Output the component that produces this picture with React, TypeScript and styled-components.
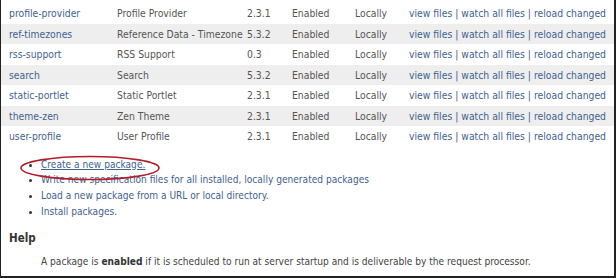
import React from "react";
import styled, { createGlobalStyle } from "styled-components";

const Global = createGlobalStyle`
  html, body { margin: 0; padding: 0; background: #fff; }
  body {
    font-family: "DejaVu Sans Condensed", "DejaVu Sans", Tahoma, sans-serif;
    font-stretch: condensed;
    font-size: 10.4px;
    color: #555;
  }
`;

const Frame = styled.div`
  width: 616px;
  height: 278px;
  box-sizing: border-box;
  border-left: 1px solid #222;
  border-right: 2px solid #222;
  border-bottom: 2px solid #222;
  overflow: hidden;
  background: #fff;
  padding-top: 3px;
`;

const Table = styled.div`
  display: grid;
  grid-template-columns: 116px 130px 45px 63px 54px 1fr;
  font-size: 10.3px;
`;

const Row = styled.div<{ $shade: boolean }>`
  display: contents;
  & > * { background: ${(p) => (p.$shade ? "#eeeeee" : "#fff")}; }
`;

const Cell = styled.div`
  height: 20.5px;
  line-height: 20.5px;
  white-space: nowrap;
`;

const FirstCell = styled(Cell)`
  padding-left: 8px;
`;

const Link = styled.a`
  color: #41628f;
  text-decoration: none;
`;

const Sep = styled.span`
  color: #41628f;
  margin: 0 3px;
`;

const List = styled.ul`
  margin: 10px 0 0 0;
  padding: 0 0 0 40px;
  list-style: disc;
  color: #333;
  font-size: 10.1px;
`;

const Item = styled.li`
  line-height: 15.7px;
  &::marker { font-size: 9px; color: #333; }
`;

const Circled = styled.span`
  position: relative;
  & a { text-decoration: underline; }
`;

const Ellipse = styled.svg`
  position: absolute;
  left: -22px;
  top: -5px;
  pointer-events: none;
`;

const HelpTitle = styled.div`
  font-weight: bold;
  color: #333;
  font-size: 11.5px;
  margin: 12px 0 0 8px;
`;

const HelpText = styled.p`
  margin: 11px 0 0 40px;
  color: #444;
  font-size: 10.1px;
  & b { color: #333; }
`;

const rows = [
  ["profile-provider", "Profile Provider", "2.3.1"],
  ["ref-timezones", "Reference Data - Timezone", "5.3.2"],
  ["rss-support", "RSS Support", "0.3"],
  ["search", "Search", "5.3.2"],
  ["static-portlet", "Static Portlet", "2.3.1"],
  ["theme-zen", "Zen Theme", "2.3.1"],
  ["user-profile", "User Profile", "2.3.1"],
];

export default function App() {
  return (
    <>
      <Global />
      <Frame>
        <Table>
          {rows.map((r, i) => (
            <Row key={r[0]} $shade={i % 2 === 1}>
              <FirstCell><Link href="#">{r[0]}</Link></FirstCell>
              <Cell>{r[1]}</Cell>
              <Cell>{r[2]}</Cell>
              <Cell>Enabled</Cell>
              <Cell>Locally</Cell>
              <Cell>
                <Link href="#">view files</Link>
                <Sep>|</Sep>
                <Link href="#">watch all files</Link>
                <Sep>|</Sep>
                <Link href="#">reload changed</Link>
              </Cell>
            </Row>
          ))}
        </Table>
        <List>
          <Item>
            <Circled>
              <Link href="#">Create a new package.</Link>
              <Ellipse width="142" height="28" viewBox="0 0 142 28">
                <ellipse cx="71" cy="14" rx="69" ry="11.5" fill="none" stroke="#b01e2a" strokeWidth="1.6" />
              </Ellipse>
            </Circled>
          </Item>
          <Item><Link href="#">Write new specification files for all installed, locally generated packages</Link></Item>
          <Item><Link href="#">Load a new package from a URL or local directory.</Link></Item>
          <Item><Link href="#">Install packages.</Link></Item>
        </List>
        <HelpTitle>Help</HelpTitle>
        <HelpText>
          A package is <b>enabled</b> if it is scheduled to run at server startup and is deliverable by the request processor.
        </HelpText>
      </Frame>
    </>
  );
}
